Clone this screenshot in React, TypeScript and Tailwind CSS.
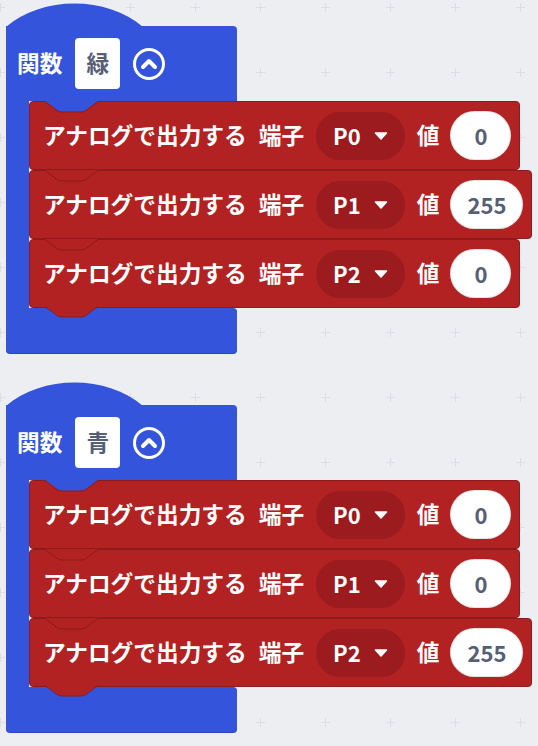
import React from "react";

type Row = { pin: string; val: string };

const fnGreen: Row[] = [
  { pin: "P0", val: "0" },
  { pin: "P1", val: "255" },
  { pin: "P2", val: "0" },
];

const fnBlue: Row[] = [
  { pin: "P0", val: "0" },
  { pin: "P1", val: "0" },
  { pin: "P2", val: "255" },
];

const NOTCH = "M0,0 L12,9 Q14,11 17,11 L36,11 Q39,11 41,9 L53,0 Z";
const NOTCH_LINE = "M0,0.5 L12,9.5 Q14,11 17,11 L36,11 Q39,11 41,9.5 L53,0.5";

function TopNotch({ first }: { first: boolean }) {
  return (
    <svg width="53" height="12" viewBox="0 0 53 12" className="absolute left-[15px] -top-px">
      <path d={NOTCH} fill={first ? "#3455db" : "#b22222"} />
      <path d={NOTCH_LINE} fill="none" stroke="#8e1b1b" strokeWidth="1" />
    </svg>
  );
}

function BottomTab() {
  return (
    <svg width="53" height="12" viewBox="0 0 53 12" className="absolute left-[15px] top-full -mt-px">
      <path d={NOTCH} fill="#b22222" />
      <path d={NOTCH_LINE} fill="none" stroke="#8e1b1b" strokeWidth="1" />
    </svg>
  );
}

function PinBlock({ row, first, last }: { row: Row; first: boolean; last: boolean }) {
  return (
    <div className="relative flex items-center gap-3 h-[69px] w-fit pl-[13px] pr-[9px] bg-[#b22222] border border-[#8e1b1b] rounded-[4px] text-white font-bold text-[22.7px]">
      <TopNotch first={first} />
      <span>アナログで出力する</span>
      <span>端子</span>
      <div className="flex items-center gap-[13px] h-[48px] pl-[17px] pr-[17px] rounded-full bg-[#9b1b1f] text-[22px]">
        <span>{row.pin}</span>
        <svg width="14" height="8" viewBox="0 0 14 8">
          <path d="M1.5,1 L12.5,1 L7,7 Z" fill="white" stroke="white" strokeWidth="1.5" strokeLinejoin="round" />
        </svg>
      </div>
      <span>値</span>
      <div className="flex items-center justify-center h-[47px] min-w-[59px] px-[16px] rounded-full bg-white text-[#575e75] text-[22px] shadow-[0_0_0_1px_#e3e3e8]">
        {row.val}
      </div>
      {last && <BottomTab />}
    </div>
  );
}

function CollapseIcon() {
  return (
    <svg width="32" height="32" viewBox="0 0 32 32">
      <circle cx="16" cy="16" r="14.5" fill="none" stroke="white" strokeWidth="3" />
      <path d="M10,19 L16,13 L22,19" fill="none" stroke="white" strokeWidth="4" strokeLinecap="round" strokeLinejoin="round" />
    </svg>
  );
}

function FunctionBlock({ name, rows }: { name: string; rows: Row[] }) {
  return (
    <div className="flex flex-col items-start">
      <svg width="138" height="24" viewBox="0 0 138 24" className="block -mb-px">
        <path d="M0,24 C35.7,-7.4 101.3,-7.4 137,24 L138,24 L138,25 L0,25 Z" fill="#3455db" />
      </svg>
      <div className="flex items-center gap-[13px] w-[231px] h-[75px] pl-[11px] bg-[#3455db] rounded-tr-[4px]">
        <span className="text-white font-bold text-[22.7px]">関数</span>
        <div className="flex items-center justify-center w-[45px] h-[51px] rounded-[4px] bg-white text-[#575e75] font-bold text-[22.7px]">
          {name}
        </div>
        <CollapseIcon />
      </div>
      <div className="flex">
        <div className="w-[23px] bg-[#3455db]" />
        <div className="flex flex-col">
          {rows.map((r, i) => (
            <PinBlock key={i} row={r} first={i === 0} last={i === rows.length - 1} />
          ))}
        </div>
      </div>
      <div className="w-[231px] h-[45px] bg-[#3455db] rounded-b-[4px] rounded-tr-[4px] shadow-[0_1px_0_#2c47bd]" />
    </div>
  );
}

function Grid() {
  return (
    <div className="absolute left-[-4px] top-[3px] grid grid-cols-[repeat(9,65px)] auto-rows-[65px]">
      {Array.from({ length: 108 }).map((_, i) => (
        <div key={i} className="relative">
          <span className="absolute left-0 top-[4px] w-[9px] h-px bg-[#dcdee3]" />
          <span className="absolute left-[4px] top-0 w-px h-[9px] bg-[#dcdee3]" />
        </div>
      ))}
    </div>
  );
}

export default function App() {
  return (
    <div className="relative w-[538px] h-[746px] overflow-hidden bg-[#eceef1] font-['Noto_Sans_CJK_JP',sans-serif]">
      <Grid />
      <div className="relative flex flex-col gap-[29px] pl-[6px] pt-[3px]">
        <FunctionBlock name="緑" rows={fnGreen} />
        <FunctionBlock name="青" rows={fnBlue} />
      </div>
    </div>
  );
}
